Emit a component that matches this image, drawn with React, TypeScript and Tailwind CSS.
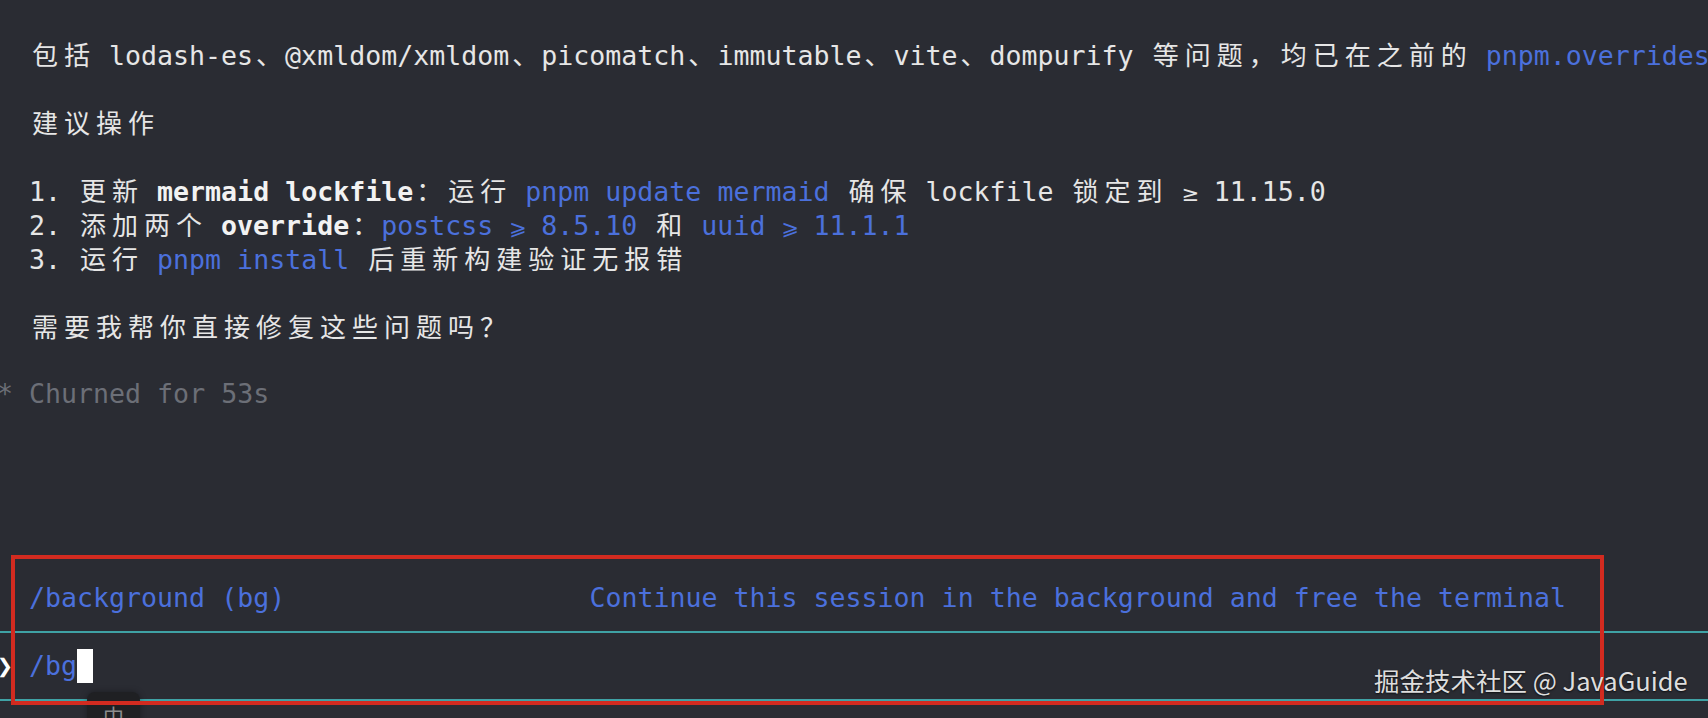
import type { ReactNode } from 'react';

// terminal grid: 16px cells, 34px rows
const isWide = (c: string) => {
  const n = c.codePointAt(0) ?? 0;
  return (n >= 0x2e80 && n <= 0x9fff) || (n >= 0xff00 && n <= 0xffef) || (n >= 0x3000 && n <= 0x303f);
};

function T({ s, className = '' }: { s: string; className?: string }) {
  const out: ReactNode[] = [];
  let buf = '';
  const flush = () => {
    if (buf) out.push(buf);
    buf = '';
  };
  Array.from(s).forEach((c, i) => {
    const n = c.codePointAt(0) ?? 0;
    if (n < 0x80) {
      buf += c;
      return;
    }
    flush();
    if (isWide(c)) {
      out.push(
        <span key={i} className="inline-block w-[32px] text-center font-['Noto_Sans_CJK_SC',sans-serif] text-[26px]">
          {c}
        </span>
      );
    } else {
      out.push(
        <span key={i} className="inline-block w-[16px] text-center font-['DejaVu_Sans',sans-serif] text-[21px]">
          {c}
        </span>
      );
    }
  });
  flush();
  return <span className={className}>{out}</span>;
}

const blue = 'text-[#4b70dc]';
const bold = 'font-bold text-[#f2f2f2]';

function Row({ children }: { children?: ReactNode }) {
  return <div className="h-[34px] whitespace-pre pl-[29px] leading-[34px]">{children}</div>;
}

function Rule() {
  return (
    <div className="flex h-[34px] items-center">
      <div className="h-[2px] w-full bg-[#3fa2a5]" />
    </div>
  );
}

export default function App() {
  return (
    <div className="relative h-[718px] w-full overflow-hidden bg-[#2a2c33] font-['DejaVu_Sans_Mono','Noto_Sans_CJK_SC',monospace] text-[26.6px] text-[#e6e6e6]">
      <div className="pt-[37px]">
        <Row>
          <T s="包括 lodash-es、@xmldom/xmldom、picomatch、immutable、vite、dompurify 等问题，均已在之前的 " />
          <T s="pnpm.overrides 中修复" className={blue} />
        </Row>
        <Row />
        <Row>
          <T s="建议操作" />
        </Row>
        <Row />
        <Row>
          <T s="1. 更新 " />
          <T s="mermaid lockfile" className={bold} />
          <T s="：运行 " />
          <T s="pnpm update mermaid" className={blue} />
          <T s=" 确保 lockfile 锁定到 ≥ 11.15.0" />
        </Row>
        <Row>
          <T s="2. 添加两个 " />
          <T s="override" className={bold} />
          <T s="：" />
          <T s="postcss ⩾ 8.5.10" className={blue} />
          <T s=" 和 " />
          <T s="uuid ⩾ 11.1.1" className={blue} />
        </Row>
        <Row>
          <T s="3. 运行 " />
          <T s="pnpm install" className={blue} />
          <T s=" 后重新构建验证无报错" />
        </Row>
        <Row />
        <Row>
          <T s="需要我帮你直接修复这些问题吗？" />
        </Row>
        <Row />
        <Row>
          <span className="ml-[-32px] text-[#6c6f77]">{'* Churned for 53s'}</span>
        </Row>
        <Row />
        <Row />
        <Row />
        <Row />
        <Row />
        <Row>
          <span className={blue}>{'/background (bg)                   Continue this session in the background and free the terminal'}</span>
        </Row>
        <Rule />
        <Row>
          <span className="ml-[-32px] inline-block w-[32px] font-bold text-white">{'❯'}</span>
          <span className={blue}>/bg</span>
          <span className="inline-block h-[34px] w-[16px] bg-white align-top" />
        </Row>
        <Rule />
      </div>

      {/* IME indicator */}
      <div className="absolute left-[87px] top-[692px] h-[40px] w-[53px] rounded-[8px] bg-[#1f2023] pt-[13px] text-center font-['Noto_Sans_CJK_SC',sans-serif] text-[21px] leading-none text-[#8c8c8c] shadow-[0_0_6px_rgba(0,0,0,0.35)]">
        中
      </div>

      {/* annotation box */}
      <div className="absolute left-[11px] top-[555px] h-[150px] w-[1593px] border-4 border-[#d22b20]" />

      {/* watermark */}
      <div className="absolute left-[1374px] top-[665px] whitespace-nowrap font-['Noto_Sans_CJK_SC',sans-serif] text-[25.5px] leading-[30px] text-[#dedede] [text-shadow:0_1px_2px_rgba(0,0,0,0.7)]">
        掘金技术社区 @ JavaGuide
      </div>
    </div>
  );
}
